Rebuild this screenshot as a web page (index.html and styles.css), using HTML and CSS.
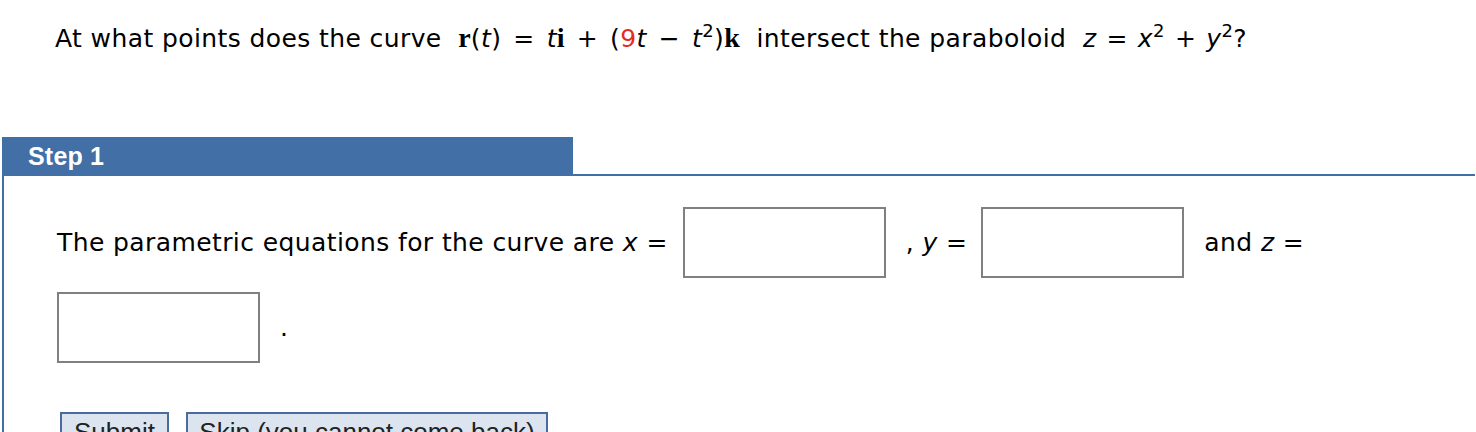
FILE: index.html
```html
<!DOCTYPE html>
<html>
<head>
<meta charset="utf-8">
<link rel="stylesheet" href="styles.css">
</head>
<body>
<div class="page">
  <p class="question">At what points does the curve&nbsp; <b class="vec">r</b>(<i>t</i>)<span class="op">=</span><i>t</i><b class="vec">i</b><span class="op">+</span>(<span class="red">9</span><i>t</i><span class="op">−</span><i>t</i><sup>2</sup>)<b class="vec">k</b>&nbsp; intersect the paraboloid&nbsp; <i>z</i><span class="op op-sm">=</span><i>x</i><sup>2</sup><span class="op op-sm">+</span><i>y</i><sup>2</sup>?</p>

  <section class="step">
    <div class="step-head">
      <div class="tab">Step 1</div>
      <div class="rule"></div>
    </div>
    <div class="step-body">
      <div class="eqs">
        <span class="txt">The parametric equations for the curve are <i>x</i> =</span>
        <span class="box gap-l15"></span>
        <span class="txt gap-l20">, <i>y</i> =</span>
        <span class="box gap-l14"></span>
        <span class="txt gap-l20">and <i>z</i> =</span>
        <span class="box"></span>
        <span class="txt dot">.</span>
      </div>
      <div class="buttons">
        <button class="btn btn-submit">Submit</button>
        <button class="btn btn-skip">Skip (you cannot come back)</button>
      </div>
    </div>
  </section>
</div>
</body>
</html>
```

FILE: styles.css
```css
html, body {
  margin: 0;
  padding: 0;
  background: #ffffff;
}

body {
  font-family: "DejaVu Sans", Verdana, sans-serif;
  color: #000000;
  overflow: hidden;
}

.page {
  width: 1476px;
  height: 432px;
  overflow: hidden;
}

.question {
  margin: 0;
  padding: 23px 0 0 55px;
  font-size: 25px;
  letter-spacing: 0.4px;
  line-height: 30px;
  white-space: nowrap;
}

.question i,
.eqs i {
  font-style: italic;
}

.op {
  display: inline-block;
  padding: 0 12px;
}

.op-sm {
  padding: 0 10px;
}

.vec {
  font-family: "Liberation Serif", serif;
  font-weight: bold;
  font-size: 28px;
  letter-spacing: 0;
}

.red {
  color: #e8291f;
}

sup {
  font-size: 18px;
  line-height: 0;
  vertical-align: 10px;
}

.step {
  margin-top: 83px;
  padding-left: 2px;
  padding-right: 1px;
}

.step-head {
  display: flex;
  align-items: flex-end;
}

.tab {
  width: 545px;
  height: 39px;
  padding-left: 26px;
  background: #416fa6;
  color: #ffffff;
  font-family: "Liberation Sans", Arial, sans-serif;
  font-weight: bold;
  font-size: 25px;
  line-height: 39px;
  letter-spacing: 0.2px;
}

.rule {
  flex: 1;
  height: 2px;
  background: #416fa6;
}

.step-body {
  border-left: 2px solid #416fa6;
  padding: 31px 0 0 53px;
  height: 300px;
}

.eqs {
  display: flex;
  flex-wrap: wrap;
  align-items: center;
  row-gap: 14px;
  width: 1380px;
  font-size: 25px;
  letter-spacing: 0.4px;
  line-height: 30px;
}

.box {
  display: block;
  width: 199px;
  height: 67px;
  border: 2px solid #808080;
  background: #ffffff;
}

.gap-l15 { margin-left: 15px; }
.gap-l14 { margin-left: 14px; }
.gap-l20 { margin-left: 20px; }

.dot {
  margin-left: 20px;
}

.buttons {
  display: flex;
  gap: 17px;
  margin-top: 49px;
  padding-left: 3px;
}

.btn {
  height: 42px;
  padding: 0 8px;
  border: 2px solid #4a6b9c;
  background: #dce5ef;
  color: #222222;
  font-family: "Liberation Sans", Arial, sans-serif;
  font-size: 26px;
  line-height: 36px;
  border-radius: 0;
  display: flex;
  align-items: flex-start;
  justify-content: center;
  white-space: nowrap;
}

.btn-submit { width: 109px; }
.btn-skip { width: 362px; }
```
